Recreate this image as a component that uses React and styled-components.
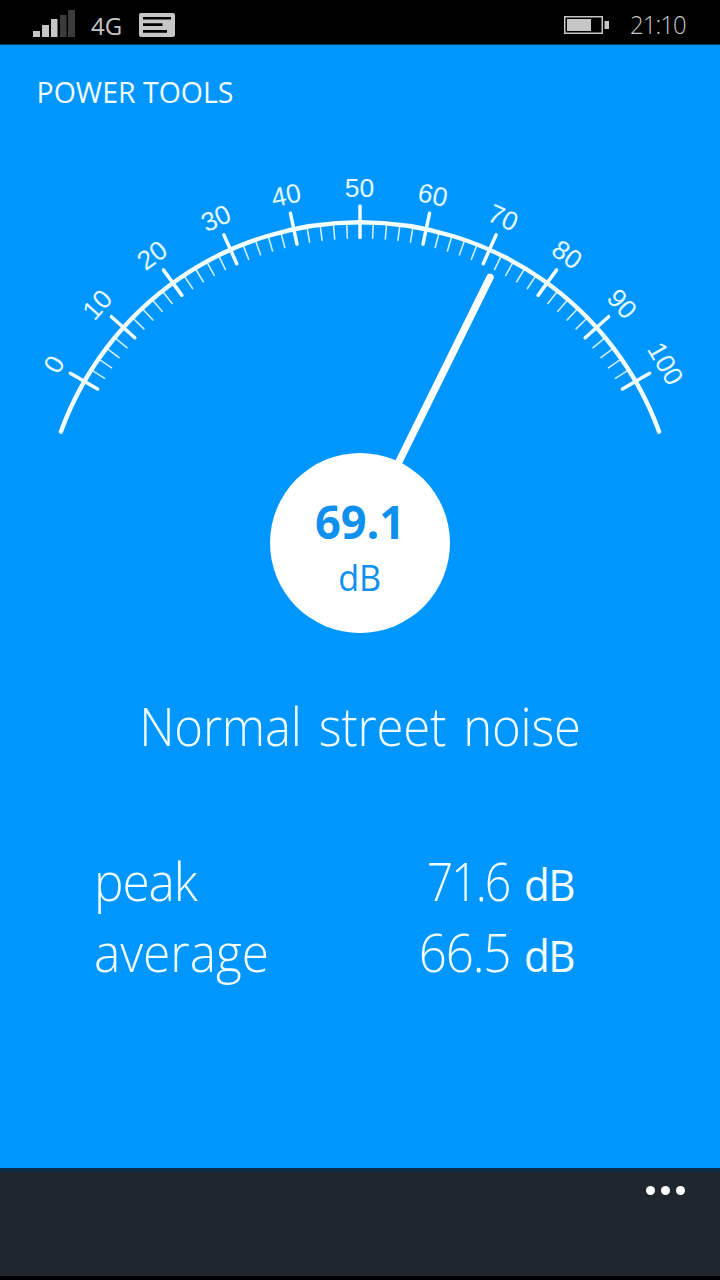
import React from 'react';
import styled, { createGlobalStyle } from 'styled-components';

const GlobalStyle = createGlobalStyle`
  * { box-sizing: border-box; }
  body { margin: 0; background: #0096ff; }
`;

const Screen = styled.div`
  width: 720px;
  height: 1280px;
  display: flex;
  flex-direction: column;
  overflow: hidden;
  background: #0096ff;
  color: #f2fdff;
  font-family: 'Open Sans', 'Noto Sans', sans-serif;
`;

const StatusBar = styled.header`
  height: 45px;
  flex: none;
  display: flex;
  align-items: flex-start;
  justify-content: space-between;
  padding: 0 34px 0 33px;
  background: #000;
  border-bottom: 1px solid #003a66;
  color: #c6c6c6;
`;

const StatusGroup = styled.div`
  display: flex;
  align-items: flex-start;
  height: 44px;
`;

const Network = styled.span`
  margin: 0 18px 0 16px;
  width: 30px;
  font-size: 24px;
  line-height: 52px;
  white-space: nowrap;
`;

const Clock = styled.time`
  margin-left: 21px;
  width: 56px;
  font-size: 26.5px;
  font-weight: 300;
  line-height: 48px;
  letter-spacing: -1px;
  white-space: nowrap;
  transform: scaleX(0.9);
  transform-origin: left;
`;

const Title = styled.h1`
  margin: 0;
  padding: 28px 0 0 36.5px;
  height: 90px;
  flex: none;
  font-size: 28.5px;
  font-weight: 400;
  line-height: 38px;
`;

const Meter = styled.section`
  display: grid;
  flex: none;
  height: 510px;
  justify-items: center;
  > * { grid-area: 1 / 1; }
`;

const Dial = styled.svg`
  display: block;
  text { font-family: 'Liberation Sans', Arial, sans-serif; font-size: 26.5px; }
`;

const Hub = styled.div`
  align-self: start;
  margin-top: 318px;
  width: 180px;
  height: 180px;
  border-radius: 50%;
  display: flex;
  flex-direction: column;
  align-items: center;
  background: #fff;
  color: #0f90ee;
`;

const HubValue = styled.strong`
  margin-top: 38px;
  font-size: 47px;
  font-weight: 700;
  line-height: 60px;
  transform: scaleX(0.96);
`;

const HubUnit = styled.span`
  font-size: 36px;
  line-height: 54px;
  transform: scaleX(0.95);
`;

const Verdict = styled.p`
  margin: 0;
  padding-top: 45px;
  height: 199px;
  flex: none;
  text-align: center;
  font-size: 52.5px;
  font-weight: 300;
  line-height: 72px;
  letter-spacing: -0.25px;
  word-spacing: 5px;
  transform: scaleX(0.935);
`;

const Stats = styled.dl`
  flex: 1;
  margin: 0;
  padding: 0 146.5px 0 93.5px;
`;

const StatRow = styled.div`
  display: flex;
  justify-content: space-between;
  height: 71px;
  font-size: 52.5px;
  font-weight: 300;
  line-height: 73px;
`;

const StatLabel = styled.dt`
  letter-spacing: ${(p) => p.$tracking}px;
  transform: scaleX(0.945);
  transform-origin: left;
`;

const StatValue = styled.dd`
  margin: 0;
  display: flex;
  align-items: baseline;
`;

const StatNumber = styled.span`
  letter-spacing: ${(p) => p.$tracking}px;
  margin-right: ${(p) => -p.$tracking}px;
  transform: scaleX(${(p) => p.$stretch});
  transform-origin: right;
`;

const StatUnit = styled.span`
  width: 50px;
  margin-left: 12px;
  font-size: 43px;
  font-weight: 500;
  letter-spacing: -1.5px;
  white-space: nowrap;
  transform: scaleX(0.98);
  transform-origin: left;
`;

const AppBar = styled.footer`
  flex: none;
  height: 112px;
  display: flex;
  justify-content: flex-end;
  align-items: flex-start;
  gap: 6px;
  padding: 14px 35px 0 0;
  background: #1f262d;
  border-top: 4px solid #0c2b44;
  border-bottom: 4px solid #000;
`;

const Dot = styled.i`
  width: 9px;
  height: 9px;
  border-radius: 50%;
  background: #fff;
`;

const SignalIcon = () => (
  <svg width="42" height="44" viewBox="0 0 42 44">
    <path fill="#c6c6c6" d="M0 31h7v6H0zM9 25h7v12H9zM18 19h6.5v18H18z" />
    <path fill="#3c3c3c" d="M27 15h6.5v22H27zM35 10h7v27h-7z" />
  </svg>
);

const MessageIcon = () => (
  <svg width="36" height="44" viewBox="0 0 36 44">
    <rect y="13" width="36" height="24" rx="2" fill="#c6c6c6" />
    <path fill="#000" d="M4 17h28v2.500H4zM4 23.300h19.500v2.700H4zM4 30h24v2.800H4z" />
  </svg>
);

const BatteryIcon = () => (
  <svg width="45" height="44" viewBox="0 0 45 44">
    <rect x="0.75" y="16.750" width="37.500" height="16.500" fill="none" stroke="#c6c6c6" strokeWidth="1.5" />
    <path fill="#c6c6c6" d="M3 19h24v12H3zM40.500 21H45v8h-4.500z" />
  </svg>
);

const CX = 360;
const CY = 405.5;
const ARC = 318.3;
const at = (deg, r) => {
  const a = (deg * Math.PI) / 180;
  return [CX + r * Math.sin(a), CY - r * Math.cos(a)];
};

const Gauge = ({ needle }) => {
  const [sx, sy] = at(-70, ARC);
  const [ex, ey] = at(70, ARC);
  const [nx, ny] = at(needle, 293.5);
  return (
    <Dial width="720" height="510" viewBox="0 0 720 510" stroke="#f2fdff" strokeLinecap="round">
      <path d={`M${sx} ${sy}A${ARC} ${ARC} 0 0 1 ${ex} ${ey}`} fill="none" strokeWidth="4.400" />
      {Array.from({ length: 51 }, (_, i) => {
        const deg = -60 + i * 2.4;
        const major = i % 5 === 0;
        const [x1, y1] = at(deg, major ? 334.5 : ARC);
        const [x2, y2] = at(deg, major ? 303 : 302.5);
        return (
          <line key={i} x1={x1} y1={y1} x2={x2} y2={y2} strokeWidth={major ? 3.5 : 1.6} strokeOpacity={major ? 1 : 0.85} />
        );
      })}
      {Array.from({ length: 11 }, (_, i) => (
        <text
          key={i}
          x={CX - 0.5}
          y={CY - 344}
          textAnchor="middle"
          fill="#e2faff"
          stroke="none"
          transform={`rotate(${-60 + i * 12} ${CX} ${CY})`}
        >
          {i * 10}
        </text>
      ))}
      <line x1={CX} y1={CY} x2={nx} y2={ny} stroke="#fff" strokeWidth="7.400" />
    </Dial>
  );
};

const readings = [
  { label: 'peak', value: '71.6', labelTracking: -1.2, valueTracking: -2.3, stretch: 0.885 },
  { label: 'average', value: '66.5', labelTracking: 0, valueTracking: -1.3, stretch: 0.94 },
];

export default function App() {
  return (
    <Screen>
      <GlobalStyle />
      <StatusBar>
        <StatusGroup>
          <SignalIcon />
          <Network>4G</Network>
          <MessageIcon />
        </StatusGroup>
        <StatusGroup>
          <BatteryIcon />
          <Clock>21:10</Clock>
        </StatusGroup>
      </StatusBar>
      <Title>POWER TOOLS</Title>
      <Meter>
        <Gauge needle={26.3} />
        <Hub>
          <HubValue>69.1</HubValue>
          <HubUnit>dB</HubUnit>
        </Hub>
      </Meter>
      <Verdict>Normal street noise</Verdict>
      <Stats>
        {readings.map((r) => (
          <StatRow key={r.label}>
            <StatLabel $tracking={r.labelTracking}>{r.label}</StatLabel>
            <StatValue>
              <StatNumber $tracking={r.valueTracking} $stretch={r.stretch}>{r.value}</StatNumber>
              <StatUnit>dB</StatUnit>
            </StatValue>
          </StatRow>
        ))}
      </Stats>
      <AppBar>
        <Dot />
        <Dot />
        <Dot />
      </AppBar>
    </Screen>
  );
}
